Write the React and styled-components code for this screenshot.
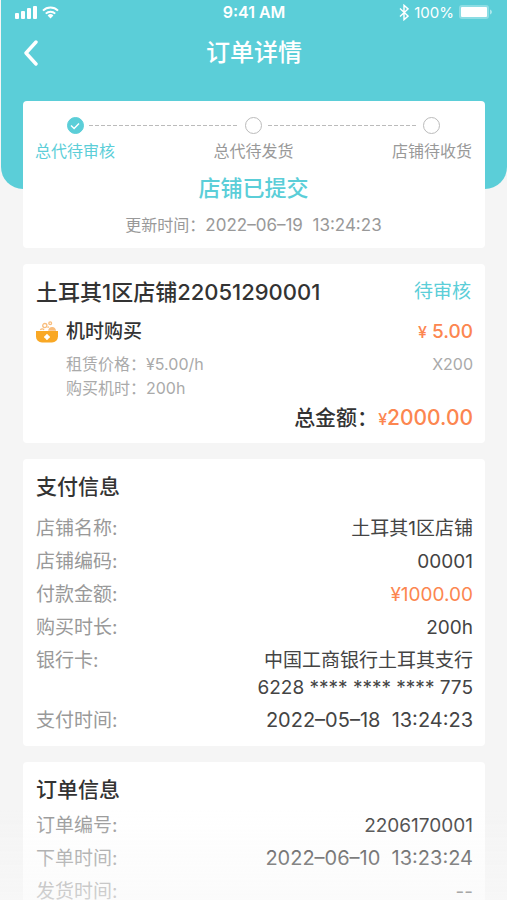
import React from "react";
import styled, { createGlobalStyle } from "styled-components";

const paymentRows = [
  { label: "店铺名称:", lines: ["土耳其1区店铺"] },
  { label: "店铺编码:", lines: ["00001"] },
  { label: "付款金额:", lines: ["¥1000.00"], price: true },
  { label: "购买时长:", lines: ["200h"] },
  { label: "银行卡:", lines: ["中国工商银行土耳其支行", "6228 **** **** **** 775"] },
  { label: "支付时间:", lines: ["2022–05–18  13:24:23"], large: true },
];

const orderRows = [
  { label: "订单编号:", lines: ["2206170001"] },
  { label: "下单时间:", lines: ["2022–06–10  13:23:24"], large: true },
  { label: "发货时间:", lines: ["--"] },
];

const SignalIcon = () => (
  <svg width="22" height="14" viewBox="0 0 22 14" fill="currentColor">
    <rect x="0" y="8" width="4" height="6" rx="1" />
    <rect x="6" y="6" width="4" height="8" rx="1" />
    <rect x="12" y="3" width="4" height="11" rx="1" />
    <rect x="18" y="1" width="4" height="13" rx="1" />
  </svg>
);

const WifiIcon = () => (
  <svg width="17" height="13" viewBox="0 0 17 13" fill="none" stroke="currentColor">
    <path d="M1 4.6a10.6 10.6 0 0 1 15 0" strokeWidth="2" />
    <path d="M3.8 7.6a6.6 6.6 0 0 1 9.4 0" strokeWidth="2" />
    <path d="M8.5 12.4 5.6 9.5a4.1 4.1 0 0 1 5.8 0z" fill="currentColor" stroke="none" />
  </svg>
);

const BluetoothIcon = () => (
  <svg width="10" height="17" viewBox="0 0 10 17" fill="none" stroke="currentColor" strokeWidth="1.4">
    <path d="M1 4.5l8 7.6-4 3.6V1.3l4 3.6-8 7.6" />
  </svg>
);

const BatteryIcon = () => (
  <svg width="34" height="14" viewBox="0 0 34 14">
    <rect x="0" y="0" width="30" height="14" rx="3" fill="#fff" opacity="0.3" />
    <rect x="2" y="2" width="26" height="10" rx="1" fill="#fff" />
    <path d="M31 4.5c2.6 1 2.6 4 0 5z" fill="#fff" opacity="0.5" />
  </svg>
);

const BackIcon = () => (
  <svg width="16" height="26" viewBox="0 0 16 26" fill="none" stroke="currentColor" strokeWidth="3.4">
    <path d="M13 2 3 13l10 11" strokeLinecap="round" strokeLinejoin="round" />
  </svg>
);

const CheckIcon = () => (
  <svg width="10" height="8" viewBox="0 0 10 8" fill="none" stroke="#fff" strokeWidth="1.4">
    <path d="M1 3.6 4.1 6.6 9 1.4" />
  </svg>
);

const PotIcon = () => (
  <svg width="22" height="22" viewBox="0 0 22 22">
    <g fill="none" stroke="#f9bd7c" strokeWidth="1.3">
      <circle cx="8.8" cy="4.6" r="2.1" />
      <circle cx="14.2" cy="2.2" r="1.4" />
      <path d="M13 9a3.2 3.2 0 0 1 6.2 0z" fill="#f9bd7c" />
      <path d="M4.4 9a2 2 0 0 1 3.6 0" />
      <path d="M11.4 6.4l1.6-.6" />
    </g>
    <path d="M0 10h22v5.5a6 6 0 0 1-6 6H6a6 6 0 0 1-6-6z" fill="#f9a825" />
    <path d="M11 14l.8 1.2 1.2.8-1.2.8L11 18l-.8-1.2L9 16l1.2-.8z" fill="#fff" stroke="#fff" strokeWidth="2" strokeLinejoin="round" />
  </svg>
);

const InfoCard = ({ title, rows, tight }) => (
  <Card>
    <CardTitle>{title}</CardTitle>
    <InfoList $tight={tight}>
      {rows.map((row) => (
        <InfoRow key={row.label}>
          <dt>{row.label}</dt>
          <InfoValue $price={row.price} $large={row.large}>
            {row.lines.map((line) => (
              <div key={line}>{line}</div>
            ))}
          </InfoValue>
        </InfoRow>
      ))}
    </InfoList>
  </Card>
);

const App = () => {
  return (
    <Page>
      <GlobalStyle />
      <Header>
        <StatusBar>
          <StatusGroup>
            <SignalIcon />
            <WifiIcon />
          </StatusGroup>
          <Clock>9:41 AM</Clock>
          <StatusGroup $end>
            <BluetoothIcon />
            <span>100%</span>
            <BatteryIcon />
          </StatusGroup>
        </StatusBar>
        <NavBar>
          <BackButton type="button" aria-label="返回">
            <BackIcon />
          </BackButton>
          <h1>订单详情</h1>
        </NavBar>
      </Header>

      <Content>
        <ProgressCard>
          <Steps>
            <Step $active>
              <Dot $active>
                <CheckIcon />
              </Dot>
              总代待审核
            </Step>
            <Line aria-hidden="true" />
            <Step>
              <Dot />
              总代待发货
            </Step>
            <Line aria-hidden="true" />
            <Step>
              <Dot />
              店铺待收货
            </Step>
          </Steps>
          <StatusTitle>店铺已提交</StatusTitle>
          <UpdateTime>
            更新时间：<time>2022–06–19  13:24:23</time>
          </UpdateTime>
        </ProgressCard>

        <OrderCard>
          <Between>
            <CardTitle $large>土耳其1区店铺22051290001</CardTitle>
            <Badge>待审核</Badge>
          </Between>
          <Product>
            <PotIcon />
            <ProductName>机时购买</ProductName>
            <Price>
              <small>¥</small> 5.00
            </Price>
          </Product>
          <Details>
            <div>
              <p>租赁价格：¥5.00/h</p>
              <p>购买机时：200h</p>
            </div>
            <p>X200</p>
          </Details>
          <Total>
            总金额：
            <TotalPrice>
              <small>¥</small>2000.00
            </TotalPrice>
          </Total>
        </OrderCard>

        <InfoCard title="支付信息" rows={paymentRows} />
        <InfoCard title="订单信息" rows={orderRows} tight />
      </Content>
      <BottomFade />
    </Page>
  );
};

const GlobalStyle = createGlobalStyle`
  * {
    box-sizing: border-box;
  }
  body {
    margin: 0;
    background: #f5f5f5;
    font-family: Inter, "Noto Sans CJK SC", sans-serif;
    color: #333;
  }
  h1, h2, p, ol, dl, dd {
    margin: 0;
    padding: 0;
  }
  svg {
    display: block;
    flex-shrink: 0;
  }
`;

const Page = styled.div`
  min-height: 100vh;
  overflow: hidden;
`;

const Header = styled.header`
  height: 189px;
  margin-left: 1px;
  background: #5bced8;
  color: #fff;
  border-radius: 0 0 22px 22px;
`;

const StatusBar = styled.div`
  display: grid;
  grid-template-columns: 1fr auto 1fr;
  align-items: center;
  height: 24px;
  padding: 0 14px;
  font-size: 15px;
`;

const StatusGroup = styled.div`
  display: flex;
  align-items: center;
  gap: 5px;
  justify-content: ${({ $end }) => ($end ? "flex-end" : "flex-start")};
`;

const Clock = styled.span`
  font-size: 16px;
  font-weight: 600;
`;

const NavBar = styled.div`
  display: grid;
  grid-template-columns: 48px 1fr 48px;
  align-items: center;
  height: 58px;
  padding: 0 18px;
  h1 {
    font-size: 24px;
    font-weight: 500;
    line-height: 32px;
    text-align: center;
  }
`;

const BackButton = styled.button`
  padding: 4px;
  border: 0;
  background: none;
  color: #fff;
  cursor: pointer;
`;

const Content = styled.main`
  display: flex;
  flex-direction: column;
  gap: 16px;
  margin-top: -88px;
  padding: 0 22px 16px 23px;
`;

const Card = styled.section`
  padding: 13px 12px 12px 13px;
  background: #fff;
  border-radius: 4px;
`;

const ProgressCard = styled(Card)`
  padding: 16px 13px 11px 12px;
  text-align: center;
`;

const OrderCard = styled(Card)`
  padding-bottom: 9px;
`;

const Steps = styled.ol`
  display: grid;
  grid-template-columns: auto 1fr auto 1fr auto;
  list-style: none;
`;

const Step = styled.li`
  display: flex;
  flex-direction: column;
  align-items: center;
  gap: 5px;
  font-size: 16px;
  line-height: 24px;
  color: ${({ $active }) => ($active ? "#5bced8" : "#999")};
`;

const Dot = styled.span`
  display: flex;
  align-items: center;
  justify-content: center;
  width: 17px;
  height: 17px;
  border: 1px solid ${({ $active }) => ($active ? "#5bced8" : "#bbb")};
  border-radius: 50%;
  background: ${({ $active }) => ($active ? "#5bced8" : "#fff")};
`;

const Line = styled.li`
  height: 1px;
  margin: 8px -26px 0;
  background: repeating-linear-gradient(90deg, #bbb 0 4px, transparent 4px 6px);
`;

const StatusTitle = styled.h2`
  margin-top: 11px;
  font-size: 22px;
  font-weight: 500;
  line-height: 28px;
  color: #5bced8;
`;

const UpdateTime = styled.p`
  margin-top: 11px;
  font-size: 16px;
  line-height: 24px;
  color: #999;
  time {
    font-size: 17px;
    white-space: pre;
  }
`;

const Between = styled.div`
  display: flex;
  justify-content: space-between;
  align-items: center;
`;

const CardTitle = styled.h2`
  font-size: ${({ $large }) => ($large ? "22px" : "21px")};
  font-weight: 500;
  line-height: 30px;
`;

const Badge = styled.span`
  padding-right: 2px;
  font-size: 19px;
  line-height: 30px;
  color: #5bced8;
`;

const Product = styled.div`
  display: flex;
  align-items: center;
  gap: 8px;
  margin-top: 11px;
  font-size: 19px;
  line-height: 28px;
`;

const ProductName = styled.span`
  flex: 1;
  font-weight: 500;
`;

const Price = styled.span`
  color: #fc8650;
  font-weight: 500;
  small {
    font-size: 16px;
  }
`;

const Details = styled.div`
  display: flex;
  justify-content: space-between;
  margin-top: 6px;
  padding-left: 30px;
  font-size: 16px;
  line-height: 24px;
  color: #aaa;
`;

const Total = styled.div`
  display: flex;
  justify-content: flex-end;
  margin-top: 3px;
  font-size: 21px;
  font-weight: 500;
  line-height: 30px;
`;

const TotalPrice = styled.span`
  color: #fc8650;
  small {
    font-size: 16px;
  }
`;

const InfoList = styled.dl`
  display: flex;
  flex-direction: column;
  gap: 6px;
  margin-top: ${({ $tight }) => ($tight ? "7px" : "13px")};
  font-size: 19px;
  line-height: 27px;
`;

const InfoRow = styled.div`
  display: flex;
  justify-content: space-between;
  dt {
    color: #999;
  }
`;

const InfoValue = styled.dd`
  text-align: right;
  white-space: pre;
  font-size: ${({ $large }) => ($large ? "20px" : "19px")};
  color: ${({ $price }) => ($price ? "#fc8650" : "#444")};
`;

const BottomFade = styled.div`
  position: fixed;
  left: 0;
  right: 0;
  bottom: 0;
  height: 90px;
  background: linear-gradient(rgba(248, 248, 248, 0), rgba(248, 248, 248, 0.6));
  pointer-events: none;
`;

export default App;
